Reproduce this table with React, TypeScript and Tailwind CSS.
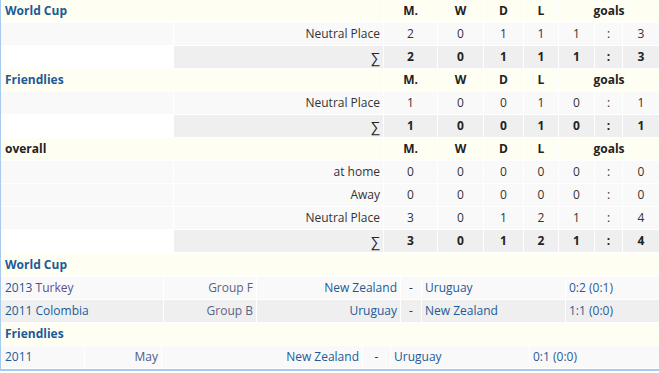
import React from "react";

const F = { fontFamily: '"Open Sans", "Noto Sans", sans-serif' };

const topCols = "grid-cols-[172px_209px_53px_45px_39px_34px_35px_27px_36px]";

function Header({ title, link }: { title: string; link: boolean }) {
  const h = "bg-[#fffef3] h-[22px] flex items-center justify-center font-bold text-[#222]";
  return (
    <>
      <div className={`bg-[#fffef3] h-[22px] flex items-center pl-[4px] font-bold ${link ? "text-[#1c5a98]" : "text-[#222]"}`}>{title}</div>
      <div className="bg-[#fffef3] h-[22px]" />
      <div className={h}>M.</div>
      <div className={h}>W</div>
      <div className={h}>D</div>
      <div className={h}>L</div>
      <div className={`${h} col-span-3`}>goals</div>
    </>
  );
}

function DataRow({ label, v }: { label: string; v: (string | number)[] }) {
  const c = "bg-[#f9f9f9] h-[22px] flex items-center justify-center text-[#333]";
  return (
    <>
      <div className="bg-[#f9f9f9] h-[22px]" />
      <div className="bg-[#f9f9f9] h-[22px] flex items-center justify-end pr-[3px] text-[#333]">{label}</div>
      {v.map((x, i) => (
        <div key={i} className={c}>{x}</div>
      ))}
    </>
  );
}

function SumRow({ v }: { v: (string | number)[] }) {
  const c = "bg-[#efefef] h-[22px] flex items-center justify-center font-bold text-[#222]";
  return (
    <>
      <div className="bg-white h-[22px]" />
      <div className="bg-[#efefef] h-[22px] flex items-center justify-end pr-[3px] text-[14px] text-[#222]">∑</div>
      {v.map((x, i) => (
        <div key={i} className={c}>{x}</div>
      ))}
    </>
  );
}

export default function App() {
  return (
    <div className="w-[659px] bg-white text-[12px] border-l border-b-2 border-[#a6cbef]" style={F}>
      <div className={`grid ${topCols} gap-px`}>
        <Header title="World Cup" link />
        <DataRow label="Neutral Place" v={[2, 0, 1, 1, 1, ":", 3]} />
        <SumRow v={[2, 0, 1, 1, 1, ":", 3]} />
        <Header title="Friendlies" link />
        <DataRow label="Neutral Place" v={[1, 0, 0, 1, 0, ":", 1]} />
        <SumRow v={[1, 0, 0, 1, 0, ":", 1]} />
        <Header title="overall" link={false} />
        <DataRow label="at home" v={[0, 0, 0, 0, 0, ":", 0]} />
        <DataRow label="Away" v={[0, 0, 0, 0, 0, ":", 0]} />
        <DataRow label="Neutral Place" v={[3, 0, 1, 2, 1, ":", 4]} />
        <SumRow v={[3, 0, 1, 2, 1, ":", 4]} />
      </div>

      <div className="mt-[2px] flex flex-col gap-px pb-px">
        <div className="bg-[#fffef3] h-[22px] flex items-center pl-[4px] font-bold text-[#1c5a98]">World Cup</div>
        <div className="grid grid-cols-[162px_92px_143px_20px_143px_93px] gap-px">
          <div className="bg-[#f9f9f9] h-[22px] flex items-center pl-[4px] text-[#1c5a98]">
            2013&nbsp;<span className="text-[#5b4f8f]">Turkey</span>
          </div>
          <div className="bg-[#f9f9f9] h-[22px] flex items-center justify-end pr-[3px] text-[#5a6482]">Group F</div>
          <div className="bg-[#f9f9f9] h-[22px] flex items-center justify-end pr-[3px] text-[#1c5a98]">New Zealand</div>
          <div className="bg-[#f9f9f9] h-[22px] flex items-center justify-center text-[#333]">-</div>
          <div className="bg-[#f9f9f9] h-[22px] flex items-center pl-[3px] text-[#1c5a98]">Uruguay</div>
          <div className="bg-[#f9f9f9] h-[22px] flex items-center pl-[3px] text-[#2a5b96]">0:2 (0:1)</div>

          <div className="bg-[#efefef] h-[22px] flex items-center pl-[4px] text-[#1c5a98]">2011 Colombia</div>
          <div className="bg-[#efefef] h-[22px] flex items-center justify-end pr-[3px] text-[#5a6482]">Group B</div>
          <div className="bg-[#efefef] h-[22px] flex items-center justify-end pr-[3px] text-[#1c5a98]">Uruguay</div>
          <div className="bg-[#efefef] h-[22px] flex items-center justify-center text-[#333]">-</div>
          <div className="bg-[#efefef] h-[22px] flex items-center pl-[3px] text-[#1c5a98]">New Zealand</div>
          <div className="bg-[#efefef] h-[22px] flex items-center pl-[3px] text-[#2a5b96]">1:1 (0:0)</div>
        </div>
        <div className="bg-[#fffef3] h-[22px] flex items-center pl-[4px] font-bold text-[#1c5a98]">Friendlies</div>
        <div className="grid grid-cols-[83px_76px_200px_27px_138px_129px] gap-px">
          <div className="bg-[#f9f9f9] h-[22px] flex items-center pl-[4px] text-[#1c5a98]">2011</div>
          <div className="bg-[#f9f9f9] h-[22px] flex items-center justify-end pr-[3px] text-[#4d5a8c]">May</div>
          <div className="bg-[#f9f9f9] h-[22px] flex items-center justify-end pr-[3px] text-[#1c5a98]">New Zealand</div>
          <div className="bg-[#f9f9f9] h-[22px] flex items-center justify-center text-[#333]">-</div>
          <div className="bg-[#f9f9f9] h-[22px] flex items-center pl-[3px] text-[#1c5a98]">Uruguay</div>
          <div className="bg-[#f9f9f9] h-[22px] flex items-center pl-[3px] text-[#2a5b96]">0:1 (0:0)</div>
        </div>
      </div>
    </div>
  );
}
